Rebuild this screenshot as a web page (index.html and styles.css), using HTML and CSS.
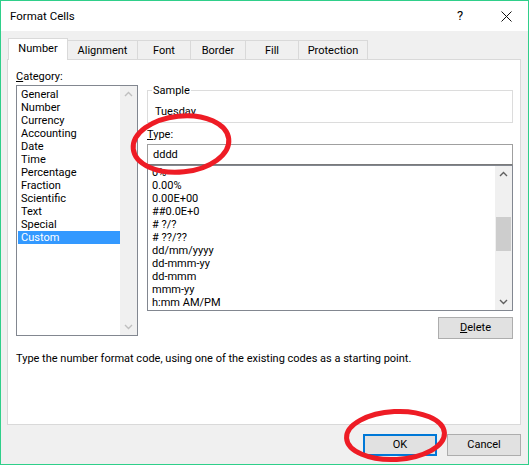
FILE: index.html
```html
<!DOCTYPE html>
<html>
<head>
<meta charset="utf-8">
<link rel="stylesheet" href="styles.css">
</head>
<body>
<div class="window">
  <div class="titlebar">
    <span class="title">Format Cells</span>
    <span class="help">?</span>
    <span class="close"><svg width="11" height="11" viewBox="0 0 11 11"><path d="M0.5 0.5 L10.5 10.5 M10.5 0.5 L0.5 10.5" stroke="#111" stroke-width="1" fill="none"/></svg></span>
  </div>
  <div class="body">
    <div class="tabs">
      <div class="tab active t-number">Number</div>
      <div class="tab t-align">Alignment</div>
      <div class="tab t-font">Font</div>
      <div class="tab t-border">Border</div>
      <div class="tab t-fill">Fill</div>
      <div class="tab t-prot">Protection</div>
    </div>
    <div class="panel">
      <div class="top">
        <div class="cat-col">
          <div class="label"><u>C</u>ategory:</div>
          <div class="catlist">
            <ul class="items">
              <li>General</li>
              <li>Number</li>
              <li>Currency</li>
              <li>Accounting</li>
              <li>Date</li>
              <li>Time</li>
              <li>Percentage</li>
              <li>Fraction</li>
              <li>Scientific</li>
              <li>Text</li>
              <li>Special</li>
              <li class="sel">Custom</li>
            </ul>
            <div class="vscroll disabled">
              <svg class="chev" width="9" height="6" viewBox="0 0 9 6"><path d="M1 5 L4.5 1.5 L8 5" stroke="#bfbfbf" stroke-width="1.4" fill="none"/></svg>
              <span class="spacer"></span>
              <svg class="chev" width="9" height="6" viewBox="0 0 9 6"><path d="M1 1 L4.5 4.5 L8 1" stroke="#bfbfbf" stroke-width="1.4" fill="none"/></svg>
            </div>
          </div>
        </div>
        <div class="right-col">
          <fieldset class="sample">
            <legend>Sample</legend>
            <div class="sample-val">Tuesday</div>
          </fieldset>
          <div class="label type-label"><u>T</u>ype:</div>
          <div class="typebox">dddd</div>
          <div class="fmtlist">
            <ul class="items fmt">
              <li>0%</li>
              <li>0.00%</li>
              <li>0.00E+00</li>
              <li>##0.0E+0</li>
              <li># ?/?</li>
              <li># ??/??</li>
              <li>dd/mm/yyyy</li>
              <li>dd-mmm-yy</li>
              <li>dd-mmm</li>
              <li>mmm-yy</li>
              <li>h:mm AM/PM</li>
            </ul>
            <div class="vscroll">
              <svg class="chev" width="9" height="6" viewBox="0 0 9 6"><path d="M1 5 L4.5 1.5 L8 5" stroke="#606060" stroke-width="1.4" fill="none"/></svg>
              <span class="track-a"></span>
              <span class="thumb"></span>
              <span class="spacer"></span>
              <svg class="chev" width="9" height="6" viewBox="0 0 9 6"><path d="M1 1 L4.5 4.5 L8 1" stroke="#606060" stroke-width="1.4" fill="none"/></svg>
            </div>
          </div>
          <div class="delrow"><button class="btn del"><u>D</u>elete</button></div>
        </div>
      </div>
      <div class="desc">Type the number format code, using one of the existing codes as a starting point.</div>
    </div>
    <div class="buttons">
      <button class="btn ok">OK</button>
      <button class="btn cancel">Cancel</button>
    </div>
  </div>
  <svg class="marks" width="529" height="465" viewBox="0 0 529 465">
    <ellipse cx="181" cy="144" rx="48" ry="28" transform="rotate(-6 181 144)" fill="none" stroke="#ee1c25" stroke-width="5"/>
    <ellipse cx="395.5" cy="435.5" rx="49" ry="24" transform="rotate(-3 395.5 435.5)" fill="none" stroke="#ee1c25" stroke-width="5"/>
  </svg>
</div>
</body>
</html>
```

FILE: styles.css
```css
* { box-sizing: border-box; }
html, body { margin: 0; padding: 0; }
body {
  font-family: Roboto, "Noto Sans", sans-serif;
  font-size: 11px;
  color: #000;
  background: #fff;
}
.window {
  position: relative;
  width: 529px;
  height: 465px;
  border: 1px solid #2fcf8a;
  background: #f0f0f0;
  display: flex;
  flex-direction: column;
  overflow: hidden;
}
.titlebar {
  height: 30px;
  background: #fff;
  display: flex;
  align-items: center;
  padding-left: 9px;
}
.title { flex: 1; font-size: 11.5px; line-height: 16px; }
.help { width: 12px; margin-right: 32px; font-size: 13px; line-height: 16px; }
.close { width: 11px; height: 11px; margin-right: 16px; display: flex; }
.body {
  flex: 1;
  padding: 7px 7px 0 6px;
  display: flex;
  flex-direction: column;
}
.tabs {
  display: flex;
  align-items: flex-end;
  padding-left: 1px;
  height: 21px;
}
.tab {
  height: 19px;
  border: 1px solid #d9d9d9;
  border-bottom: none;
  margin-left: -1px;
  display: flex;
  align-items: center;
  justify-content: center;
  line-height: 13px;
  padding-bottom: 0;
  background: #f0f0f0;
}
.tab.active {
  height: 22px;
  margin-left: 0;
  margin-bottom: -1px;
  background: #fff;
  position: relative;
  z-index: 2;
  padding-bottom: 3px;
}
.t-number { width: 60px; }
.t-align { width: 71px; }
.t-font { width: 54px; }
.t-border { width: 56px; }
.t-fill { width: 54px; }
.t-prot { width: 70px; }
.panel {
  width: 514px;
  height: 366px;
  border: 1px solid #d9d9d9;
  background: #fff;
  padding: 9px 7px 0 8px;
  display: flex;
  flex-direction: column;
}
.top { display: flex; gap: 9px; }
.label { line-height: 15px; height: 15px; }
.cat-col { width: 122px; display: flex; flex-direction: column; }
.catlist {
  margin-top: 1px;
  height: 251px;
  border: 1px solid #828790;
  display: flex;
  background: #fff;
}
.items {
  list-style: none;
  margin: 0;
  padding: 2px 0 0 1px;
  flex: 1;
}
.items li {
  line-height: 13px;
  height: 13px;
  padding-left: 3px;
  white-space: nowrap;
}
.items li.sel { background: #3399ff; color: #fff; }
.vscroll {
  width: 17px;
  background: #f0f0f0;
  display: flex;
  flex-direction: column;
  align-items: center;
}
.chev { display: block; margin: 5px 0; }
.spacer { flex: 1; }
.track-a { height: 35px; }
.thumb { width: 15px; height: 34px; background: #cdcdcd; }
.right-col {
  width: 366px;
  margin-top: 14px;
  display: flex;
  flex-direction: column;
}
.sample {
  margin: 0;
  padding: 0 0 3px 4px;
  border: 1px solid #dcdcdc;
  min-width: 0;
}
.sample legend {
  padding: 0 1px;
  line-height: 15px;
}
.sample-val { line-height: 15px; margin: 6px 0 0 3px; }
.type-label { margin-top: 4px; }
.typebox {
  margin-top: 2px;
  height: 21px;
  border: 1px solid #a0a0a0;
  border-bottom-color: #7a7a7a;
  line-height: 19px;
  padding-left: 5px;
}
.fmtlist {
  height: 146px;
  border: 1px solid #828790;
  display: flex;
}
.fmt { padding: 0 0 0 1px; }
.delrow { display: flex; justify-content: flex-end; margin-top: 6px; }
.btn {
  font: inherit;
  color: #000;
  width: 74px;
  height: 22px;
  border: 1px solid #adadad;
  background: #e1e1e1;
  padding: 0;
  line-height: 18px;
}
.btn.del { width: 75px; }
.desc { margin-top: 12px; line-height: 15px; white-space: nowrap; }
.buttons {
  display: flex;
  justify-content: flex-end;
  gap: 10px;
  margin-top: 9px;
  padding-right: 0;
}
.btn.ok { border: 2px solid #0078d7; }
.marks { position: absolute; left: -1px; top: -1px; pointer-events: none; }
```
